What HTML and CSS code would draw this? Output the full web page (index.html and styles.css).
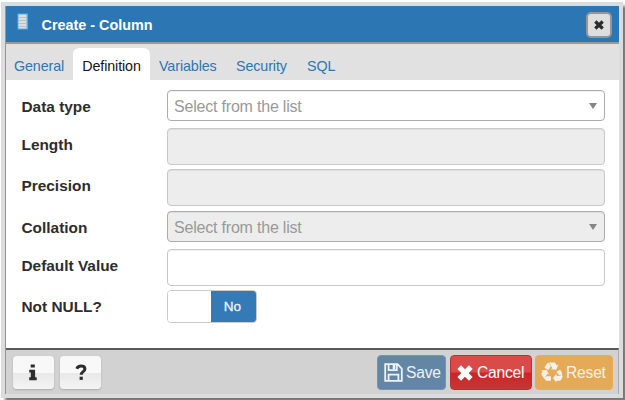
FILE: index.html
```html
<!DOCTYPE html>
<html lang="en">
<head>
<meta charset="utf-8">
<title>Create - Column</title>
<link rel="stylesheet" href="styles.css">
</head>
<body>
<div class="frame">
<div class="dialog">
  <header class="header">
    <svg class="column-icon" width="12" height="17" viewBox="0 0 12 17"><rect x=".5" y=".5" width="10.5" height="16" fill="#55aeea"/><rect x="1.5" y="1.5" width="8" height="14" fill="#dedede"/><path d="M2 4.5h7M2 7.5h7M2 10.5h7M2 13.5h7" stroke="#b9bfc3"/></svg>
    <h1 class="title">Create - Column</h1>
    <button class="close" aria-label="Close"><svg width="10" height="10" viewBox="0 0 10 10"><path d="M1.3 1.5l7.4 7M8.7 1.5L1.3 8.5" stroke="#2b2b2b" stroke-width="3.2"/></svg></button>
  </header>
  <nav class="tabs">
    <a class="tab general">General</a><a class="tab active">Definition</a><a class="tab variables">Variables</a><a class="tab security">Security</a><a class="tab sql">SQL</a>
  </nav>
  <main class="form">
    <div class="row short"><label>Data type</label><div class="field select"><span>Select from the list</span><i class="arrow"></i></div></div>
    <div class="row"><label>Length</label><div class="field disabled"></div></div>
    <div class="row"><label>Precision</label><div class="field disabled"></div></div>
    <div class="row short"><label>Collation</label><div class="field select disabled"><span>Select from the list</span><i class="arrow"></i></div></div>
    <div class="row"><label>Default Value</label><div class="field"></div></div>
    <div class="row"><label>Not NULL?</label><div class="switch"><span class="knob"></span><span class="off">No</span></div></div>
  </main>
  <footer class="footer">
    <button class="btn plain" aria-label="Info"><svg class="info-icon" width="10" height="17" viewBox="0 0 10 17"><path d="M2.7.5h4.1v3.1H2.7zM1.2 5.7h5.9v7.6h1.6v2.9H1.2v-2.9h1.6V8.6H1.2z" fill="#2d2d2d"/></svg></button>
    <button class="btn plain" aria-label="Help"><svg width="12" height="17" viewBox="0 0 12 17"><path d="M1.8 4.8C2.5 3 4 2.1 6 2.1c2.5 0 3.9 1.2 3.9 2.9C9.9 7.7 6.2 7.6 6.2 10.8" fill="none" stroke="#2d2d2d" stroke-width="3"/><path d="M4.6 12.7h3.2v3.2H4.6z" fill="#2d2d2d"/></svg></button>
    <button class="btn save"><svg width="19" height="19" viewBox="0 0 19 19" fill="none" stroke="#eef2f5" stroke-width="1.8"><path d="M1.2 1.2h12.3l4.3 4.3v12.3H1.2zM4.6 1.5v5.7h8.2V1.5M4.6 17.5v-5.9h9.8v5.9"/><path d="M10 2v4.3" stroke-width="2.6"/></svg><span>Save</span></button>
    <button class="btn cancel"><svg width="16" height="16" viewBox="0 0 16 16"><path d="M2.2 2.2l11.6 11.6M13.8 2.2L2.2 13.8" stroke="#fff" stroke-width="5.2"/></svg><span>Cancel</span></button>
    <button class="btn reset"><svg width="22" height="21" viewBox="0 0 22 21" fill="#f7f1e8"><path d="M7.6.6h5.2c.8 0 1.400.4 1.800 1l1.200 2 1.700-1-2.300 5.200-5.700-.5 1.800-1.100-2.400-4.200C8.500 1.300 8.100.9 7.600.6z"/><path d="M6.900 1c.6 0 1.100.3 1.500 1l1.300 2.200-2.300 3.900-4-2.300 2.300-3.900c.3-.6.700-.9 1.200-.9z"/><path d="M20.300 11.800l1 1.800c.4.700.3 1.400 0 2l-1.200 2.100c-.4.700-1 1-1.800 1h-2.900v1.900l-3.400-4.400 3.400-4.600v2.100h4c.6-.5.900-1.100.9-1.900z"/><path d="M16.800 8.900l2.300-1.300 1.700 2.900c.4.800.2 1.700-.5 2.200-.4.300-.7.400-1.200.4h-.8l-3.200-3.300z"/><path d="M.2 8.400l5.500-.6 2.300 5-1.800-1-2.100 3.600c-.4.700-.2 1.300.1 1.900-.6-.2-1-.5-1.300-1L.700 13.100c-.4-.7-.4-1.400 0-2.100l.9-1.600z"/><path d="M5.100 14.300h4.800v4.400H5.900c-1.300 0-2.100-1-2.100-2.100 0-.4.200-.8.400-1.200z"/></svg><span>Reset</span></button>
  </footer>
</div>
</div>
</body>
</html>
```
FILE: styles.css
```css
* { box-sizing: border-box; }
body {
  margin: 0;
  width: 625px;
  height: 400px;
  padding: 2px 2px 2px 1px;
  overflow: hidden;
  background: #fff;
  font-family: "Liberation Sans", Arial, sans-serif;
}
.frame {
  width: 622px;
  height: 396px;
  padding: 4px 4px 4px 5px;
  background: #dcdcdc;
  box-shadow: 4px 4px 3px #777;
}
.dialog {
  height: 388px;
  display: flex;
  flex-direction: column;
  background: #fff;
  box-shadow: -1px 0 #969696;
}
.header {
  height: 38px;
  display: flex;
  flex: none;
  background: #2c76b4;
  border-bottom: 2px solid #999;
}
.column-icon { margin: 7px 0 0 11px; }
.title {
  flex: 1;
  margin: 11px 0 0 12.5px;
  color: #fff;
  font-size: 14.4px;
  line-height: 17px;
}
button { padding: 0; border: 0; font-family: inherit; }
.close {
  width: 26px;
  height: 26px;
  margin: 6px 7px 0 0;
  display: flex;
  align-items: center;
  justify-content: center;
  background: #dedede;
  border: 2px solid #969696;
  border-radius: 5px;
}
.close svg { flex: none; }
.tabs {
  height: 36px;
  flex: none;
  display: flex;
  align-items: flex-end;
  padding-left: 8px;
  background: #e1e1e1;
}
.tab {
  height: 32px;
  line-height: 36px;
  font-size: 14.3px;
  letter-spacing: -.1px;
  color: #2c76b4;
  white-space: nowrap;
}
.general { width: 59px; }
.active {
  width: 77px;
  text-align: center;
  background: #fff;
  color: #151515;
  border-radius: 6px 6px 0 0;
}
.variables { width: 77px; margin-left: 9px; }
.security { width: 71px; }
.form { height: 268px; padding: 10px 14px 0 15.5px; flex: none; }
.row { height: 41.3px; display: flex; align-items: flex-start; }
.short { height: 38px; }
label {
  width: 145.5px;
  flex: none;
  padding-top: 8px;
  color: #2d2d2d;
  font-size: 15.4px;
  font-weight: bold;
  line-height: 18px;
}
.field {
  width: 438px;
  height: 37px;
  border: 1px solid #c9c9c9;
  border-radius: 4px;
  background: #fff;
  box-shadow: inset 0 1px 1px #0001;
}
.select {
  height: 31px;
  padding: 3px 7px 0 6px;
  display: flex;
  align-items: center;
  justify-content: space-between;
  border-color: #acacac;
  color: #999;
  font-size: 16px;
  letter-spacing: -.2px;
}
.disabled { background: #ededed; }
.arrow {
  border: 4.5px solid transparent;
  border-top: 6px solid #858585;
  border-bottom: 0;
  margin-top: -2px;
}
.switch {
  width: 90px;
  height: 33px;
  display: flex;
  border: 1px solid #ccc;
  border-radius: 4px;
  overflow: hidden;
}
.knob { width: 43px; background: #fff; }
.off {
  flex: 1;
  padding-right: 2px;
  background: #337ab7;
  color: #eef5fb;
  font-size: 13.5px;
  text-align: center;
  line-height: 31px;
  -webkit-text-stroke: .3px;
}
.footer {
  flex: 1;
  display: flex;
  align-items: flex-start;
  padding: 5px 6px 0 7px;
  background: #d2d2d2;
  border-top: 2px solid #5a5a5a;
  border-right: 1px solid #aaa;
}
.btn {
  height: 35px;
  display: flex;
  align-items: center;
  flex: none;
  border-radius: 4px;
  font-size: 15.6px;
  letter-spacing: -.2px;
  color: #fff;
}
.plain {
  width: 41px;
  height: 33px;
  margin: 1px 6px 0 0;
  justify-content: center;
  background: linear-gradient(#f8f8f8 0 50%, #e8e8e8 51%, #f4f4f4);
  box-shadow: 0 1px 2px #aaa;
}
.info-icon { margin-right: 2px; }
.save {
  width: 69px;
  margin-left: 270px;
  padding-left: 6px;
  gap: 3px;
  background: #6486a5;
  border: 1px solid #6f96b9;
  color: #eef2f5;
}
.cancel {
  width: 82px;
  margin-left: 4px;
  padding-left: 6px;
  gap: 4px;
  background: linear-gradient(#d94b49 0 49%, #c92525 51%, #c83634);
  border: 1px solid #b83331;
}
.reset {
  width: 78px;
  margin-left: 3px;
  padding-left: 5px;
  gap: 3px;
  background: #e4aa58;
  border: 1px solid #e8ac56;
  color: #f7f1e8;
}
```
